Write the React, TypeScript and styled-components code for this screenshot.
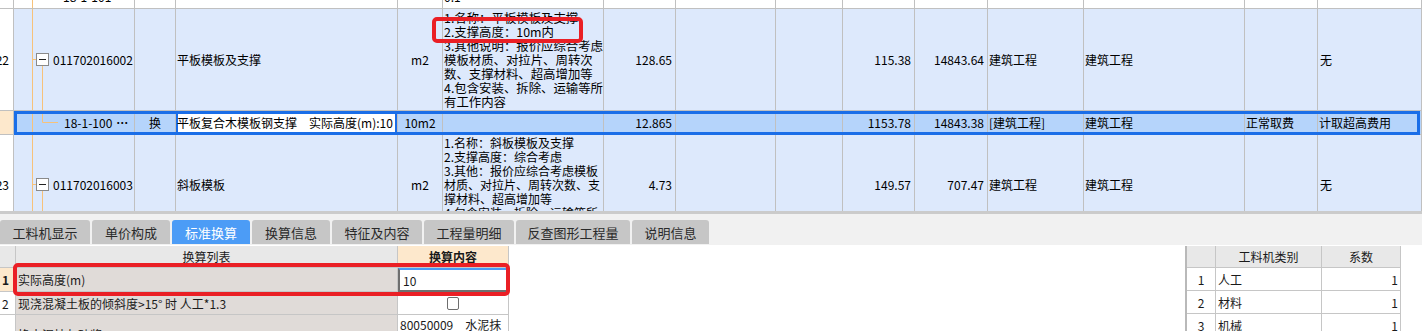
import styled, { createGlobalStyle } from 'styled-components';

const GlobalStyle = createGlobalStyle`
  *, *::before, *::after { box-sizing: border-box; }
  html, body { margin: 0; padding: 0; background: #fff; }
  body {
    font-family: "Noto Sans CJK SC", "Noto Sans", sans-serif;
    font-size: 12px;
    color: #000;
    overflow: hidden;
  }
`;

type Align = 'left' | 'right' | 'center';

const COLS = [14, 121, 41, 222, 45, 161, 72, 100, 67, 72, 73, 96, 161, 73, 104];
const tpl = (c: number[]) => c.map((w) => w + 'px').join(' ');

const ROW_BG = '#dde9fc';
const SEL_BG = '#b5d4fb';
const SEL_BLUE = '#1a6ee8';
const PEACH = '#fde8cc';
const GRID_LINE = '#c0c0c0';
const TREE = '#f7c27a';

const Page = styled.div`
  width: 1422px;
  height: 331px;
  overflow: hidden;
  display: flex;
  flex-direction: column;
`;

const GridArea = styled.div`
  position: relative;
  height: 211px;
  flex: none;
  overflow: hidden;
`;

const GridBody = styled.div`
  margin-top: -15px;
`;

const Row = styled.div<{ $h: number; $bg?: string }>`
  display: grid;
  grid-template-columns: ${tpl(COLS)};
  height: ${({ $h }) => $h}px;
  background: ${({ $bg }) => $bg ?? ROW_BG};
`;

const SelRow = styled.div`
  display: grid;
  grid-template-columns: 14px 1fr;
  height: 24px;
`;

const Band = styled.div`
  position: relative;
  display: grid;
  grid-template-columns: ${tpl(COLS.slice(1))};
  background: ${SEL_BG};

  &::after {
    content: '';
    position: absolute;
    inset: 0 2px 0 0;
    border: 3px solid ${SEL_BLUE};
    pointer-events: none;
    z-index: 2;
  }
`;

const Cell = styled.div<{ $align?: Align; $bg?: string }>`
  position: relative;
  display: flex;
  align-items: center;
  justify-content: ${({ $align }) =>
    $align === 'right' ? 'flex-end' : $align === 'center' ? 'center' : 'flex-start'};
  padding: ${({ $align }) =>
    $align === 'right' ? '0 3px 0 0' : $align === 'center' ? '0' : '0 0 0 1px'};
  border-right: 1px solid ${GRID_LINE};
  border-bottom: 1px solid ${GRID_LINE};
  background: ${({ $bg }) => $bg ?? 'transparent'};
  overflow: hidden;
  white-space: nowrap;
`;

const RowNum = styled(Cell)`
  justify-content: flex-end;
  padding: 0 4px 0 0;
  background: ${({ $bg }) => $bg ?? '#fff'};
`;

const CodeCell = styled(Cell)<{ $indent: number }>`
  padding-left: ${({ $indent }) => $indent}px;
`;

const More = styled.span`
  margin-left: 4px;
  font-weight: 700;
`;

const EditCell = styled(Cell)`
  background: #fff;
  padding-left: 1px;
  box-shadow: inset 2px 0 ${SEL_BLUE}, inset -2px 0 ${SEL_BLUE};
`;

const DescCell = styled(Cell)<{ $fs: number }>`
  flex-direction: column;
  align-items: flex-start;
  justify-content: center;
  padding-left: 1px;
  font-size: ${({ $fs }) => $fs}px;
  line-height: 14px;
`;

const TreeSvg = styled.svg`
  position: absolute;
  left: 0;
  top: 0;
  overflow: visible;
  pointer-events: none;
`;

function Tree({ h, kind }: { h: number; kind: 'line' | 'parent' | 'child' }) {
  const c = Math.floor((h - 1) / 2) + 0.5;
  return (
    <TreeSvg width={50} height={h} viewBox={`0 0 50 ${h}`}>
      <line x1={18.5} y1={0} x2={18.5} y2={h} stroke={TREE} />
      {kind === 'parent' && (
        <>
          <line x1={18.5} y1={c} x2={22} y2={c} stroke={TREE} />
          <line x1={28.5} y1={c + 6.5} x2={28.5} y2={h} stroke={TREE} />
          <rect x={22.5} y={c - 6} width={12} height={12} fill="#fff" stroke="#8a8a8a" />
          <line x1={25} y1={c} x2={32} y2={c} stroke="#222" />
        </>
      )}
      {kind === 'child' && (
        <>
          <line x1={28.5} y1={0} x2={28.5} y2={c} stroke={TREE} />
          <line x1={28.5} y1={c} x2={44} y2={c} stroke={TREE} />
        </>
      )}
    </TreeSvg>
  );
}

const Mark = styled.div<{ $l: number; $t: number; $w: number; $h: number }>`
  position: absolute;
  left: ${({ $l }) => $l}px;
  top: ${({ $t }) => $t}px;
  width: ${({ $w }) => $w}px;
  height: ${({ $h }) => $h}px;
  border: 4px solid #ea1f25;
  border-radius: 5px;
  pointer-events: none;
  z-index: 5;
`;

/* ---------- tabs ---------- */

const TabBar = styled.div`
  flex: none;
  height: 34px;
  display: flex;
  align-items: flex-end;
  gap: 2px;
  padding: 6px 0 1px;
  border-top: 3px solid #cbcbcb;
  background: #f1f1f1;
`;

const Tab = styled.div<{ $w: number; $active?: boolean }>`
  width: ${({ $w }) => $w}px;
  height: 24px;
  display: flex;
  align-items: center;
  justify-content: center;
  border-radius: 3px 3px 0 0;
  font-size: 13px;
  color: ${({ $active }) => ($active ? '#fff' : '#2a2a2a')};
  background: ${({ $active }) => ($active ? '#4c9cf6' : '#c6c6c6')};
`;

const TABS: [string, number][] = [
  ['工料机显示', 90],
  ['单价构成', 78],
  ['标准换算', 78],
  ['换算信息', 78],
  ['特征及内容', 90],
  ['工程量明细', 90],
  ['反查图形工程量', 114],
  ['说明信息', 77],
];

/* ---------- bottom panel ---------- */

const Bottom = styled.div`
  position: relative;
  flex: 1;
  display: flex;
  align-items: flex-start;
  padding-top: 1px;
  background: #fff;
  overflow: hidden;
`;

const CalcTable = styled.div`
  flex: none;
  width: 509px;
  display: grid;
  grid-template-columns: 16px 382px 111px;
  grid-template-rows: 22px 24px 23px 40px;
`;

const PCell = styled.div<{ $bg?: string; $align?: Align; $bold?: boolean; $top?: boolean }>`
  display: flex;
  align-items: ${({ $top }) => ($top ? 'flex-start' : 'center')};
  justify-content: ${({ $align }) =>
    $align === 'right' ? 'flex-end' : $align === 'center' ? 'center' : 'flex-start'};
  padding: ${({ $top }) => ($top ? '1px 2px 0' : '0 2px')};
  border-right: 1px solid #c6c6c6;
  border-bottom: 1px solid #c6c6c6;
  background: ${({ $bg }) => $bg ?? '#fff'};
  font-weight: ${({ $bold }) => ($bold ? 700 : 400)};
  color: #1a1a1a;
  white-space: nowrap;
  overflow: hidden;
`;

const InputCell = styled(PCell)`
  border-top: 2px solid #4a9af5;
  border-left: 2px solid #6f6f6f;
  border-bottom: 2px solid #6f6f6f;
  border-right: 1px solid #d8d8d8;
  padding-left: 3px;
`;

const Check = styled.span`
  width: 12px;
  height: 13px;
  border: 1px solid #6e6e6e;
  border-radius: 2px;
  background: #fff;
`;

const Gap = styled.div`
  flex: 1;
`;

const TypeTable = styled.div`
  flex: none;
  width: 216px;
  margin-right: 21px;
  display: grid;
  grid-template-columns: 29px 106px 79px;
  grid-template-rows: 22px 23px 23px 23px;
  border-left: 2px solid #b9b9b9;
`;

const HEAD = '#e8e8e8';
const NAME_BG = '#e0dbd8';

export default function App() {
  return (
    <Page>
      <GlobalStyle />
      <GridArea>
        <GridBody>
          <Row $h={24} $bg="#fff">
            <RowNum />
            <CodeCell $indent={49}>
              <Tree h={24} kind="line" />
              18-1-101
            </CodeCell>
            <Cell />
            <Cell />
            <Cell />
            <DescCell $fs={12}>0.1</DescCell>
            <Cell />
            <Cell />
            <Cell />
            <Cell />
            <Cell />
            <Cell />
            <Cell />
            <Cell />
            <Cell />
          </Row>

          <Row $h={102}>
            <RowNum>22</RowNum>
            <CodeCell $indent={39}>
              <Tree h={102} kind="parent" />
              011702016002
            </CodeCell>
            <Cell />
            <Cell>平板模板及支撑</Cell>
            <Cell $align="center">m2</Cell>
            <DescCell $fs={12.4}>
              <div>1.名称：平板模板及支撑</div>
              <div>2.支撑高度：10m内</div>
              <div>3.其他说明：报价应综合考虑</div>
              <div>模板材质、对拉片、周转次</div>
              <div>数、支撑材料、超高增加等</div>
              <div>4.包含安装、拆除、运输等所</div>
              <div>有工作内容</div>
            </DescCell>
            <Cell $align="right">128.65</Cell>
            <Cell />
            <Cell />
            <Cell $align="right">115.38</Cell>
            <Cell $align="right">14843.64</Cell>
            <Cell>建筑工程</Cell>
            <Cell>建筑工程</Cell>
            <Cell />
            <Cell style={{ paddingLeft: 2 }}>无</Cell>
          </Row>

          <SelRow>
            <RowNum $bg={PEACH} />
            <Band>
              <CodeCell $indent={50}>
                <Tree h={24} kind="child" />
                18-1-100<More>⋯</More>
              </CodeCell>
              <Cell $align="center">换</Cell>
              <EditCell>平板复合木模板钢支撑　实际高度(m):10</EditCell>
              <Cell $align="center">10m2</Cell>
              <Cell />
              <Cell $align="right">12.865</Cell>
              <Cell />
              <Cell />
              <Cell $align="right">1153.78</Cell>
              <Cell $align="right">14843.38</Cell>
              <Cell>[建筑工程]</Cell>
              <Cell>建筑工程</Cell>
              <Cell>正常取费</Cell>
              <Cell>计取超高费用</Cell>
            </Band>
          </SelRow>

          <Row $h={100}>
            <RowNum>23</RowNum>
            <CodeCell $indent={39}>
              <Tree h={100} kind="parent" />
              011702016003
            </CodeCell>
            <Cell />
            <Cell>斜板模板</Cell>
            <Cell $align="center">m2</Cell>
            <DescCell $fs={12}>
              <div>1.名称：斜板模板及支撑</div>
              <div>2.支撑高度：综合考虑</div>
              <div>3.其他：报价应综合考虑模板</div>
              <div>材质、对拉片、周转次数、支</div>
              <div>撑材料、超高增加等</div>
              <div>4.包含安装、拆除、运输等所</div>
              <div>有工作内容</div>
            </DescCell>
            <Cell $align="right">4.73</Cell>
            <Cell />
            <Cell />
            <Cell $align="right">149.57</Cell>
            <Cell $align="right">707.47</Cell>
            <Cell>建筑工程</Cell>
            <Cell>建筑工程</Cell>
            <Cell />
            <Cell style={{ paddingLeft: 2 }}>无</Cell>
          </Row>
        </GridBody>
        <Mark $l={432} $t={17} $w={151} $h={26} />
      </GridArea>

      <TabBar>
        {TABS.map(([label, w]) => (
          <Tab key={label} $w={w} $active={label === '标准换算'}>
            {label}
          </Tab>
        ))}
      </TabBar>

      <Bottom>
        <CalcTable>
          <PCell $bg={HEAD} />
          <PCell $bg={HEAD} $align="center">换算列表</PCell>
          <PCell $bg={PEACH} $align="center" $bold>换算内容</PCell>

          <PCell $bg={PEACH} $bold>1</PCell>
          <PCell $bg={NAME_BG}>实际高度(m)</PCell>
          <InputCell>10</InputCell>

          <PCell>2</PCell>
          <PCell $bg={NAME_BG}>现浇混凝土板的倾斜度&gt;15° 时 人工*1.3</PCell>
          <PCell $align="center">
            <Check />
          </PCell>

          <PCell>3</PCell>
          <PCell $bg={NAME_BG}>换水泥抹灰砂浆 1:2</PCell>
          <PCell $top>80050009　水泥抹</PCell>
        </CalcTable>

        <Gap />

        <TypeTable>
          <PCell $bg={HEAD} />
          <PCell $bg={HEAD} $align="center">工料机类别</PCell>
          <PCell $bg={HEAD} $align="center">系数</PCell>

          <PCell $align="center">1</PCell>
          <PCell>人工</PCell>
          <PCell $align="right">1</PCell>

          <PCell $align="center">2</PCell>
          <PCell>材料</PCell>
          <PCell $align="right">1</PCell>

          <PCell $align="center">3</PCell>
          <PCell>机械</PCell>
          <PCell $align="right">1</PCell>
        </TypeTable>

        <Mark $l={13} $t={18} $w={497} $h={33} />
      </Bottom>
    </Page>
  );
}
